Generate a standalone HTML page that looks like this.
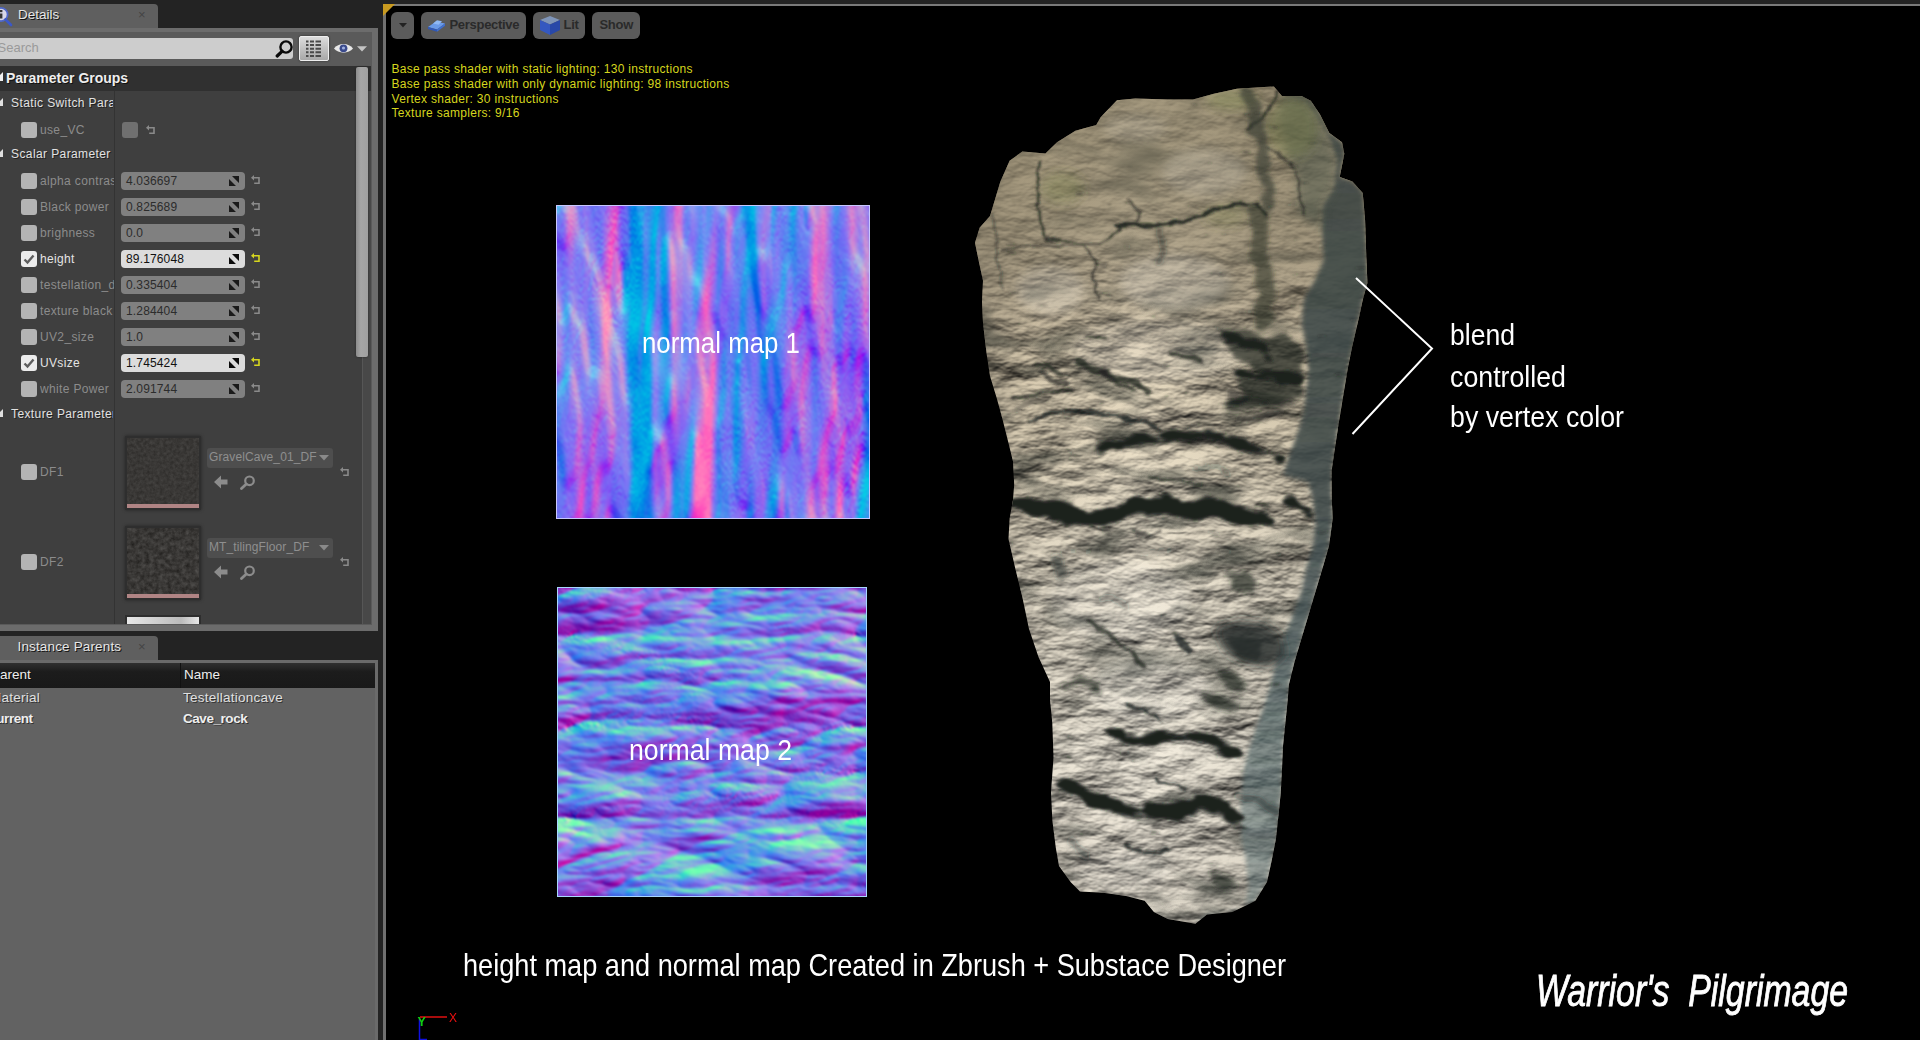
<!DOCTYPE html>
<html><head><meta charset="utf-8"><title>Material Instance Editor</title>
<style>
*{box-sizing:border-box;margin:0;padding:0}
html,body{width:1920px;height:1040px;overflow:hidden;background:#232323;font-family:"Liberation Sans",sans-serif;font-size:12px;color:#ddd}
.abs{position:absolute}
#vp{position:absolute;left:383px;top:4px;width:1537px;height:1036px;background:#000;border-left:3px solid #707070;border-top:2px solid #7a7a7a}
#dtab,#itab{position:absolute;left:0;width:158px;height:24px;background:#5f5f5f;border-radius:0 4px 0 0;color:#e6e6e6;font-size:13.5px;text-shadow:1px 1px 0 #111}
#dpanel{position:absolute;left:-7px;top:28px;width:385px;height:603px;background:#5a5a5a;border:6px solid #6c6c6c;border-top-width:4px}
#ipanel{position:absolute;left:-3px;top:660px;width:381px;height:390px;background:#626262;border:3px solid #6a6a6a}
.lbl{position:absolute;left:40px;color:#8c8c8c;font-size:12px;letter-spacing:.35px;white-space:nowrap;overflow:hidden}
.lbl.on{color:#e4e4e4}
.cb{position:absolute;left:21px;width:16px;height:16px;background:#b4b4b4;border-radius:3px}
.vb{position:absolute;left:121px;width:124px;height:18px;border-radius:4px;background:#808080;color:#2c2c2c;font-size:12px;line-height:18px;padding-left:5px;letter-spacing:.15px}
.cb.on{background:#ececec}
.vb.on{background:#dcdcdc;color:#111}
.hd{position:absolute;left:11px;color:#e2e2e2;font-size:12px;letter-spacing:.4px;white-space:nowrap;text-shadow:1px 1px 0 #222}
.tb{position:absolute;top:12px;height:27px;background:#5b5b5b;border-radius:6px;color:#2a2a2a;font-size:13px;letter-spacing:-.3px;font-weight:bold;white-space:nowrap}
.ipt{font-size:13.5px;color:#eee;white-space:nowrap;text-shadow:1px 1px 0 rgba(0,0,0,.5)}
</style></head>
<body>
<!-- LEFT: details -->
<div id="dtab" style="top:4px"><span class="abs" style="left:18px;top:3px">Details</span><span class="abs" style="left:138px;top:3px;color:#444;text-shadow:none;font-size:13px">×</span></div>
<div id="dpanel"></div>
<div id="rows">
<div class="abs" style="left:0;top:38px;width:293px;height:21px;background:#cdcdcd;border-radius:0 3px 3px 0;color:#9a9a9a;font-size:13px;line-height:20px"><span class="abs" style="left:-2.5px;top:0">Search</span></div>
<div class="abs" style="left:299px;top:36px;width:30px;height:25px;border:1px solid #eee;border-radius:2px;background:linear-gradient(#dcdcdc,#a8a8a8);box-shadow:0 0 2px #222"></div>
<div class="abs" style="left:0;top:66px;width:371px;height:25px;background:#303030"></div>
<div class="abs" style="left:0;top:91px;width:362px;height:533px;background:#3f3f3f"></div>
<div class="abs" style="left:362px;top:91px;width:9px;height:533px;background:#484848;border-left:1px solid #565656"></div>
<div class="abs" style="left:114px;top:91px;width:1px;height:533px;background:#333"></div>
<div class="abs" style="left:356px;top:67px;width:12px;height:290px;background:linear-gradient(90deg,#8c8c8c,#a6a6a6 40%,#a0a0a0);border-radius:2px;box-shadow:0 0 2px #222"></div>
<div class="abs" style="left:6px;top:70px;font-size:14px;font-weight:bold;color:#eee;text-shadow:1px 1px 0 #111;white-space:nowrap">Parameter Groups</div>
<div class="hd" style="top:96px;width:102px;overflow:hidden">Static Switch Parameter Values</div>
<div class="hd" style="top:147px;width:102px;overflow:hidden">Scalar Parameter Values</div>
<div class="hd" style="top:407px;width:102px;overflow:hidden">Texture Parameter Values</div>
<div class="cb" style="top:122px"></div><div class="lbl" style="top:123px">use_VC</div>
<div class="abs" style="left:122px;top:122px;width:16px;height:16px;background:#707070;border-radius:3px"></div>
<div class="cb" style="top:173px"></div><div class="lbl" style="top:174px;width:74px">alpha contrast</div><div class="vb" style="top:172px">4.036697</div>
<div class="cb" style="top:199px"></div><div class="lbl" style="top:200px;width:74px">Black power</div><div class="vb" style="top:198px">0.825689</div>
<div class="cb" style="top:225px"></div><div class="lbl" style="top:226px;width:74px">brighness</div><div class="vb" style="top:224px">0.0</div>
<div class="cb on" style="top:251px"></div><div class="lbl on" style="top:252px;width:74px">height</div><div class="vb on" style="top:250px">89.176048</div>
<div class="cb" style="top:277px"></div><div class="lbl" style="top:278px;width:74px">testellation_depth</div><div class="vb" style="top:276px">0.335404</div>
<div class="cb" style="top:303px"></div><div class="lbl" style="top:304px;width:74px">texture black</div><div class="vb" style="top:302px">1.284404</div>
<div class="cb" style="top:329px"></div><div class="lbl" style="top:330px;width:74px">UV2_size</div><div class="vb" style="top:328px">1.0</div>
<div class="cb on" style="top:355px"></div><div class="lbl on" style="top:356px;width:74px">UVsize</div><div class="vb on" style="top:354px">1.745424</div>
<div class="cb" style="top:381px"></div><div class="lbl" style="top:382px;width:74px">white Power</div><div class="vb" style="top:380px">2.091744</div>
<div class="cb" style="top:464px"></div><div class="lbl" style="top:465px">DF1</div>
<div class="abs" style="left:125px;top:436px;width:76px;height:74px;background:#2e2e2e;box-shadow:0 0 3px #222"><svg class="abs" style="left:2px;top:2px" width="72" height="66"><filter id="tn0" x="0" y="0" width="100%" height="100%" color-interpolation-filters="sRGB"><feTurbulence type="fractalNoise" baseFrequency="0.3" numOctaves="3" seed="2"/><feColorMatrix type="matrix" values="0.125 0 0 0 0.1625  0.125 0 0 0 0.1555  0.125 0 0 0 0.1475  0 0 0 0 1"/></filter><rect width="72" height="66" filter="url(#tn0)"/></svg><div class="abs" style="left:2px;top:68px;width:72px;height:4px;background:#b08484"></div></div>
<div class="abs" style="left:207px;top:448px;width:126px;height:20px;background:#4e4e4e;border-radius:3px;color:#8f8f8f;font-size:12px;line-height:18.5px;padding-left:2px;white-space:nowrap;letter-spacing:.1px">GravelCave_01_DF</div>
<div class="cb" style="top:554px"></div><div class="lbl" style="top:555px">DF2</div>
<div class="abs" style="left:125px;top:526px;width:76px;height:74px;background:#2e2e2e;box-shadow:0 0 3px #222"><svg class="abs" style="left:2px;top:2px" width="72" height="66"><filter id="tn1" x="0" y="0" width="100%" height="100%" color-interpolation-filters="sRGB"><feTurbulence type="fractalNoise" baseFrequency="0.22" numOctaves="3" seed="8"/><feColorMatrix type="matrix" values="0.225 0 0 0 0.1125  0.225 0 0 0 0.1055  0.225 0 0 0 0.09749999999999999  0 0 0 0 1"/></filter><rect width="72" height="66" filter="url(#tn1)"/></svg><div class="abs" style="left:2px;top:68px;width:72px;height:4px;background:#b08484"></div></div>
<div class="abs" style="left:207px;top:538px;width:126px;height:20px;background:#4e4e4e;border-radius:3px;color:#8f8f8f;font-size:12px;line-height:18.5px;padding-left:2px;white-space:nowrap;letter-spacing:.1px">MT_tilingFloor_DF</div>
<div class="abs" style="left:125px;top:615px;width:76px;height:9px;background:#2e2e2e"><div class="abs" style="left:2px;top:2px;width:72px;height:7px;background:linear-gradient(90deg,#e8e8e8,#d0d0d0 40%,#bbb 75%,#e8e8e8)"></div></div>
<!--ICONS--><svg class="abs" style="left:146px;top:125px" width="10" height="10" viewBox="0 0 10 10"><path d="M0 2.8L3 0V5.6Z" fill="#8a8a8a"/><path d="M2.5 2.8H8V8.2H3.2" fill="none" stroke="#8a8a8a" stroke-width="1.6"/></svg>
<svg class="abs" style="left:229px;top:176px" width="10" height="10" viewBox="0 0 10 10"><path d="M3 0H10V7Z M0 3V10H7Z" fill="#1a1a1a"/></svg>
<svg class="abs" style="left:251px;top:175px" width="10" height="10" viewBox="0 0 10 10"><path d="M0 2.8L3 0V5.6Z" fill="#8a8a8a"/><path d="M2.5 2.8H8V8.2H3.2" fill="none" stroke="#8a8a8a" stroke-width="1.6"/></svg>
<svg class="abs" style="left:229px;top:202px" width="10" height="10" viewBox="0 0 10 10"><path d="M3 0H10V7Z M0 3V10H7Z" fill="#1a1a1a"/></svg>
<svg class="abs" style="left:251px;top:201px" width="10" height="10" viewBox="0 0 10 10"><path d="M0 2.8L3 0V5.6Z" fill="#8a8a8a"/><path d="M2.5 2.8H8V8.2H3.2" fill="none" stroke="#8a8a8a" stroke-width="1.6"/></svg>
<svg class="abs" style="left:229px;top:228px" width="10" height="10" viewBox="0 0 10 10"><path d="M3 0H10V7Z M0 3V10H7Z" fill="#1a1a1a"/></svg>
<svg class="abs" style="left:251px;top:227px" width="10" height="10" viewBox="0 0 10 10"><path d="M0 2.8L3 0V5.6Z" fill="#8a8a8a"/><path d="M2.5 2.8H8V8.2H3.2" fill="none" stroke="#8a8a8a" stroke-width="1.6"/></svg>
<svg class="abs" style="left:229px;top:254px" width="10" height="10" viewBox="0 0 10 10"><path d="M3 0H10V7Z M0 3V10H7Z" fill="#0c0c0c"/></svg>
<svg class="abs" style="left:251px;top:253px" width="10" height="10" viewBox="0 0 10 10"><path d="M0 2.8L3 0V5.6Z" fill="#d6d61e"/><path d="M2.5 2.8H8V8.2H3.2" fill="none" stroke="#d6d61e" stroke-width="1.6"/></svg>
<svg class="abs" style="left:21px;top:251px" width="16" height="16" viewBox="0 0 16 16"><path d="M3.5 8.5L6.5 11.5L12.5 4.5" fill="none" stroke="#5e5e5e" stroke-width="2.4"/></svg>
<svg class="abs" style="left:229px;top:280px" width="10" height="10" viewBox="0 0 10 10"><path d="M3 0H10V7Z M0 3V10H7Z" fill="#1a1a1a"/></svg>
<svg class="abs" style="left:251px;top:279px" width="10" height="10" viewBox="0 0 10 10"><path d="M0 2.8L3 0V5.6Z" fill="#8a8a8a"/><path d="M2.5 2.8H8V8.2H3.2" fill="none" stroke="#8a8a8a" stroke-width="1.6"/></svg>
<svg class="abs" style="left:229px;top:306px" width="10" height="10" viewBox="0 0 10 10"><path d="M3 0H10V7Z M0 3V10H7Z" fill="#1a1a1a"/></svg>
<svg class="abs" style="left:251px;top:305px" width="10" height="10" viewBox="0 0 10 10"><path d="M0 2.8L3 0V5.6Z" fill="#8a8a8a"/><path d="M2.5 2.8H8V8.2H3.2" fill="none" stroke="#8a8a8a" stroke-width="1.6"/></svg>
<svg class="abs" style="left:229px;top:332px" width="10" height="10" viewBox="0 0 10 10"><path d="M3 0H10V7Z M0 3V10H7Z" fill="#1a1a1a"/></svg>
<svg class="abs" style="left:251px;top:331px" width="10" height="10" viewBox="0 0 10 10"><path d="M0 2.8L3 0V5.6Z" fill="#8a8a8a"/><path d="M2.5 2.8H8V8.2H3.2" fill="none" stroke="#8a8a8a" stroke-width="1.6"/></svg>
<svg class="abs" style="left:229px;top:358px" width="10" height="10" viewBox="0 0 10 10"><path d="M3 0H10V7Z M0 3V10H7Z" fill="#0c0c0c"/></svg>
<svg class="abs" style="left:251px;top:357px" width="10" height="10" viewBox="0 0 10 10"><path d="M0 2.8L3 0V5.6Z" fill="#d6d61e"/><path d="M2.5 2.8H8V8.2H3.2" fill="none" stroke="#d6d61e" stroke-width="1.6"/></svg>
<svg class="abs" style="left:21px;top:355px" width="16" height="16" viewBox="0 0 16 16"><path d="M3.5 8.5L6.5 11.5L12.5 4.5" fill="none" stroke="#5e5e5e" stroke-width="2.4"/></svg>
<svg class="abs" style="left:229px;top:384px" width="10" height="10" viewBox="0 0 10 10"><path d="M3 0H10V7Z M0 3V10H7Z" fill="#1a1a1a"/></svg>
<svg class="abs" style="left:251px;top:383px" width="10" height="10" viewBox="0 0 10 10"><path d="M0 2.8L3 0V5.6Z" fill="#8a8a8a"/><path d="M2.5 2.8H8V8.2H3.2" fill="none" stroke="#8a8a8a" stroke-width="1.6"/></svg>
<svg class="abs" style="left:340px;top:467px" width="10" height="10" viewBox="0 0 10 10"><path d="M0 2.8L3 0V5.6Z" fill="#8a8a8a"/><path d="M2.5 2.8H8V8.2H3.2" fill="none" stroke="#8a8a8a" stroke-width="1.6"/></svg>
<svg class="abs" style="left:319px;top:455px" width="10" height="6"><path d="M0 0H10L5 5.5Z" fill="#8a8a8a"/></svg>
<svg class="abs" style="left:214px;top:475px" width="14" height="14" viewBox="0 0 14 14"><path d="M0 7L7 0.5V4.5H13.5V9.5H7V13.5Z" fill="#8c8c8c"/></svg>
<svg class="abs" style="left:240px;top:475px" width="16" height="15" viewBox="0 0 16 15"><circle cx="9.5" cy="5.8" r="4.3" fill="none" stroke="#8c8c8c" stroke-width="2.2"/><path d="M6.3 9L1.5 13.5" stroke="#8c8c8c" stroke-width="2.8" stroke-linecap="round"/></svg>
<svg class="abs" style="left:340px;top:557px" width="10" height="10" viewBox="0 0 10 10"><path d="M0 2.8L3 0V5.6Z" fill="#8a8a8a"/><path d="M2.5 2.8H8V8.2H3.2" fill="none" stroke="#8a8a8a" stroke-width="1.6"/></svg>
<svg class="abs" style="left:319px;top:545px" width="10" height="6"><path d="M0 0H10L5 5.5Z" fill="#8a8a8a"/></svg>
<svg class="abs" style="left:214px;top:565px" width="14" height="14" viewBox="0 0 14 14"><path d="M0 7L7 0.5V4.5H13.5V9.5H7V13.5Z" fill="#8c8c8c"/></svg>
<svg class="abs" style="left:240px;top:565px" width="16" height="15" viewBox="0 0 16 15"><circle cx="9.5" cy="5.8" r="4.3" fill="none" stroke="#8c8c8c" stroke-width="2.2"/><path d="M6.3 9L1.5 13.5" stroke="#8c8c8c" stroke-width="2.8" stroke-linecap="round"/></svg>
<svg class="abs" style="left:275px;top:39px" width="19" height="19" viewBox="0 0 19 19"><circle cx="11" cy="8" r="5.6" fill="none" stroke="#0a0a0a" stroke-width="2.4"/><path d="M7 12.3L2.2 17" stroke="#0a0a0a" stroke-width="3.2" stroke-linecap="round"/></svg>
<svg class="abs" style="left:299px;top:36px" width="30" height="25" viewBox="0 0 30 25"><path d="M7 5.5H9.5M11 5.5H15M16.5 5.5H22" stroke="#4a4a4a" stroke-width="2"/><path d="M7 9.1H9.5M11 9.1H15M16.5 9.1H22" stroke="#4a4a4a" stroke-width="2"/><path d="M7 12.7H9.5M11 12.7H15M16.5 12.7H22" stroke="#4a4a4a" stroke-width="2"/><path d="M7 16.3H9.5M11 16.3H15M16.5 16.3H22" stroke="#4a4a4a" stroke-width="2"/><path d="M7 19.9H9.5M11 19.9H15M16.5 19.9H22" stroke="#4a4a4a" stroke-width="2"/></svg>
<svg class="abs" style="left:333px;top:41px" width="36" height="15" viewBox="0 0 36 15"><path d="M1 7.5C5 1.5 16 1.5 20 7.5C16 13 5 13 1 7.5Z" fill="#e8e8e8"/><circle cx="10.5" cy="7.3" r="3.9" fill="#3a4a8c"/><circle cx="10.5" cy="7" r="1.6" fill="#9fb0e0"/><path d="M24 5.3H34L29 10.5Z" fill="#c4c4c4"/></svg>
<svg class="abs" style="left:-6px;top:72px" width="9" height="9"><path d="M9 0V9H0Z" fill="#f0f0f0"/></svg>
<svg class="abs" style="left:-5px;top:98px" width="8" height="8"><path d="M8 0V8H0Z" fill="#e0e0e0"/></svg>
<svg class="abs" style="left:-5px;top:149px" width="8" height="8"><path d="M8 0V8H0Z" fill="#e0e0e0"/></svg>
<svg class="abs" style="left:-5px;top:409px" width="8" height="8"><path d="M8 0V8H0Z" fill="#e0e0e0"/></svg>
<svg class="abs" style="left:-8px;top:7px" width="22" height="20" viewBox="0 0 22 20"><circle cx="9" cy="7.5" r="6.6" fill="#d8d8e8" stroke="#5068c8" stroke-width="1.8"/><path d="M13.5 12.5L19 18" stroke="#3c58c8" stroke-width="2.6" stroke-linecap="round"/><rect x="8" y="6.5" width="2.4" height="5" fill="#333"/><rect x="8" y="3" width="2.4" height="2.2" fill="#333"/></svg>
<svg class="abs" style="left:0;top:640px" width="13" height="16" viewBox="0 0 13 16"><path d="M-2 1H12V4H-2ZM-2 6.5H2V9.5H-2ZM4 6.5H12V9.5H4ZM-2 12H2V15H-2ZM4 12H12V15H4Z" fill="#f0f0f0"/></svg><!--/ICONS-->
</div>
<!-- LEFT: instance parents -->
<div id="itab" style="top:636px"><span class="abs" style="left:17.5px;top:3px;letter-spacing:.15px">Instance Parents</span><span class="abs" style="left:138px;top:3px;color:#444;text-shadow:none;font-size:13px">×</span></div>
<div id="ipanel"><div class="abs" style="left:0;top:0;width:375px;height:25px;background:linear-gradient(#303030,#1c1c1c 35%,#191919)"></div><div class="abs" style="left:180px;top:0;width:1px;height:25px;background:#111"></div>
<span class="abs ipt" style="left:-9px;top:4px">Parent</span><span class="abs ipt" style="left:184px;top:4px">Name</span>
<span class="abs ipt" style="left:-10px;top:27px;color:#e0e0e0;letter-spacing:.25px">Material</span><span class="abs ipt" style="left:183px;top:27px;color:#e0e0e0;letter-spacing:.25px">Testellationcave</span>
<span class="abs ipt" style="left:-13px;top:48px;font-weight:bold;letter-spacing:-.45px">Current</span><span class="abs ipt" style="left:183px;top:48px;font-weight:bold;letter-spacing:-.45px">Cave_rock</span>
</div>
<!-- VIEWPORT -->
<div id="vp"></div>
<!--VPSTART-->
<!-- toolbar -->
<div class="tb" style="left:391px;width:23px"><svg class="abs" style="left:7.5px;top:11.3px" width="8" height="5"><path d="M0 0h8l-4 4.5z" fill="#222"/></svg></div>
<div class="tb" style="left:421px;width:105px"><svg class="abs" style="left:6px;top:7px" width="20" height="13" viewBox="0 0 20 13"><path d="M1 8L9 2.5L18 4.5L10 10.5Z" fill="#6a9ae8"/><path d="M1 8V10L10 12.8V10.5Z" fill="#2f58b8"/><path d="M10 10.5V12.8L18 6.8V4.5Z" fill="#3f6fd0"/><path d="M6 4.6L10 1.2L15 2.2L11.5 5.8Z" fill="#8fb8f4"/></svg><span class="abs" style="left:28.5px;top:5px">Perspective</span></div>
<div class="tb" style="left:533px;width:52px"><svg class="abs" style="left:6px;top:3px" width="22" height="21" viewBox="0 0 22 21"><path d="M1 5L11 1L21 5L11 9.5Z" fill="#7f95b8"/><path d="M1 5V15L11 20V9.5Z" fill="#3458c0"/><path d="M11 9.5V20L21 15V5Z" fill="#2848a8"/></svg><span class="abs" style="left:30.5px;top:5px">Lit</span></div>
<div class="tb" style="left:592px;width:48px"><span class="abs" style="left:7.5px;top:5px">Show</span></div>
<div class="abs" id="stats" style="left:391.5px;top:62px;color:#d6d61e;font-size:12px;letter-spacing:.31px;line-height:14.75px;white-space:nowrap">Base pass shader with static lighting: 130 instructions<br>Base pass shader with only dynamic lighting: 98 instructions<br>Vertex shader: 30 instructions<br>Texture samplers: 9/16</div>
<svg class="abs" style="left:0;top:0" width="1920" height="1040" viewBox="0 0 1920 1040">
<defs>
<filter id="nm1" x="0" y="0" width="100%" height="100%" color-interpolation-filters="sRGB">
<feTurbulence type="fractalNoise" baseFrequency="0.011 0.002" numOctaves="4" seed="3" result="h0"/>
<feComponentTransfer in="h0" result="h1"><feFuncR type="discrete" tableValues="0 .1 .2 .3 .4 .5 .6 .7 .8 .9 1"/></feComponentTransfer>
<feGaussianBlur in="h1" stdDeviation="2.2 4" result="h2"/>
<feComposite in="h2" in2="h0" operator="arithmetic" k1="0" k2="0.7" k3="1.2" k4="-0.12" result="h"/>
<feConvolveMatrix in="h" order="5 1" kernelMatrix="-1 -1 0 1 1" divisor="0.23" bias="0.46" preserveAlpha="true" result="dx"/>
<feConvolveMatrix in="h" order="1 5" kernelMatrix="1 1 0 -1 -1" divisor="0.1" bias="0.46" preserveAlpha="true" result="dy"/>
<feColorMatrix in="dx" type="matrix" values="1 0 0 0 0  0 0 0 0 0  1 0 0 0 0  0 0 0 0 1" result="r"/>
<feColorMatrix in="dy" type="matrix" values="0 0 0 0 0  1 0 0 0 0  0 0 0 0 0  0 0 0 0 1" result="g"/>
<feComposite in="r" in2="g" operator="arithmetic" k1="0" k2="1" k3="1" k4="0" result="rg"/>
<feComponentTransfer in="rg" result="ct"><feFuncB type="table" tableValues="0.13 0.06 0 0 0"/></feComponentTransfer>
<feColorMatrix in="ct" type="matrix" values="1 0 0 0 0  0 1 1 0 0  0 0 0 0 0  0 0 0 0 1" result="m1"/>
<feColorMatrix in="rg" type="matrix" values="0 0 0 0 0  0 0 0 0 0  0 0 1 0 0  0 0 0 0 1" result="b0"/>
<feComponentTransfer in="b0" result="b1"><feFuncB type="table" tableValues="0.9 0.93 0.96 0.86 0.74"/></feComponentTransfer>
<feComposite in="m1" in2="b1" operator="arithmetic" k1="0" k2="1" k3="1" k4="0" result="fin"/>
<feGaussianBlur in="fin" stdDeviation="1"/>
</filter>
<filter id="nm2" x="0" y="0" width="100%" height="100%" color-interpolation-filters="sRGB">
<feTurbulence type="turbulence" baseFrequency="0.0035 0.011" numOctaves="5" seed="12" result="h"/>
<feConvolveMatrix in="h" order="5 1" kernelMatrix="-1 -1 0 1 1" divisor="0.25" bias="0.47" preserveAlpha="true" result="dx"/>
<feConvolveMatrix in="h" order="1 5" kernelMatrix="1 1 0 -1 -1" divisor="0.35" bias="0.49" preserveAlpha="true" result="dy"/>
<feColorMatrix in="dx" type="matrix" values="1 0 0 0 0  0 0 0 0 0  0 0 0 0 0  0 0 0 0 1" result="r"/>
<feColorMatrix in="dy" type="matrix" values="0 0 0 0 0  1 0 0 0 0  1 0 0 0 0  0 0 0 0 1" result="g"/>
<feComposite in="r" in2="g" operator="arithmetic" k1="0" k2="1" k3="1" k4="0" result="rg"/>
<feComponentTransfer in="rg" result="fin"><feFuncB type="table" tableValues="0.62 0.8 0.95 0.84 0.7"/></feComponentTransfer>
<feGaussianBlur in="fin" stdDeviation="0.8"/>
</filter>
</defs>
<g id="nmaps">
<rect x="556" y="205" width="314" height="314" fill="#c8c8ff"/>
<clipPath id="c1"><rect x="557" y="206" width="312" height="312"/></clipPath><g clip-path="url(#c1)"><rect x="533" y="182" width="360" height="360" filter="url(#nm1)"/></g>
<rect x="557" y="587" width="310" height="310" fill="#a8d8ff"/>
<clipPath id="c2"><rect x="558" y="588" width="308" height="308"/></clipPath><g clip-path="url(#c2)"><rect x="534" y="564" width="356" height="356" filter="url(#nm2)"/></g>
</g>
<g id="rock">
<defs>
<clipPath id="rc"><path d="M975.0 242.7 L979.6 227.7 L990.0 216.0 L1000.4 181.5 L1009.6 160.8 L1022.3 151.5 L1045.4 153.4 L1057.0 142.3 L1075.4 130.8 L1096.2 125.0 L1100.8 117.0 L1117.0 100.3 L1135.4 98.5 L1167.7 99.6 L1193.0 99.6 L1213.9 93.8 L1237.0 88.8 L1273.9 86.5 L1282.0 96.0 L1301.6 96.0 L1310.8 100.8 L1320.0 114.6 L1329.3 133.0 L1342.0 142.3 L1344.3 153.8 L1339.7 177.0 L1352.4 181.5 L1362.7 193.0 L1365.0 218.5 L1366.2 253.0 L1367.4 283.0 L1362.7 300.0 L1359.3 316.0 L1352.3 346.0 L1347.7 369.0 L1343.0 397.0 L1338.5 424.6 L1335.0 447.7 L1331.6 470.8 L1331.6 496.0 L1332.7 518.5 L1329.0 546.0 L1322.3 569.0 L1315.4 592.0 L1308.5 615.0 L1301.5 638.5 L1294.6 661.5 L1288.9 684.6 L1287.7 700.0 L1285.4 723.0 L1283.0 746.0 L1282.0 769.0 L1280.8 792.0 L1278.5 815.0 L1276.0 838.5 L1271.5 861.5 L1267.0 882.0 L1255.4 900.8 L1246.0 905.4 L1232.3 912.0 L1207.0 914.6 L1195.4 923.8 L1167.7 919.0 L1153.9 912.0 L1144.6 900.8 L1126.0 896.0 L1103.0 892.7 L1080.0 891.5 L1070.8 882.3 L1059.0 866.0 L1055.8 847.7 L1052.3 820.0 L1051.0 792.0 L1053.5 757.7 L1052.3 723.0 L1050.0 700.0 L1050.0 682.0 L1038.5 657.0 L1029.0 629.0 L1022.3 597.0 L1015.4 569.0 L1008.5 539.0 L1009.6 518.5 L1013.0 500.0 L1014.2 484.6 L1013.0 461.5 L1008.5 443.0 L1002.7 420.0 L997.0 399.0 L990.0 376.0 L986.5 353.0 L983.0 323.0 L982.0 301.5 L983.0 280.8 L978.5 260.0Z"/></clipPath>
<linearGradient id="rg" x1="0" y1="90" x2="0" y2="920" gradientUnits="userSpaceOnUse"><stop offset="0" stop-color="#b9ab8e"/><stop offset="0.16" stop-color="#c2b396"/><stop offset="0.27" stop-color="#dccdb0"/><stop offset="0.42" stop-color="#e8dbc0"/><stop offset="0.6" stop-color="#efe6d2"/><stop offset="0.8" stop-color="#f4eddd"/><stop offset="1" stop-color="#e8e0d0"/></linearGradient>
<linearGradient id="rgx" x1="975" y1="0" x2="1300" y2="0" gradientUnits="userSpaceOnUse"><stop offset="0" stop-color="#000" stop-opacity="0.22"/><stop offset="0.15" stop-color="#000" stop-opacity="0.05"/><stop offset="0.5" stop-color="#fff" stop-opacity="0.08"/><stop offset="1" stop-color="#000" stop-opacity="0.08"/></linearGradient>
<filter id="rocky" x="0" y="0" width="100%" height="100%" color-interpolation-filters="sRGB"><feTurbulence type="fractalNoise" baseFrequency="0.014 0.03" numOctaves="5" seed="4" result="n"/><feDiffuseLighting in="n" surfaceScale="7" diffuseConstant="1.08" lighting-color="#fff" result="l"><feDistantLight azimuth="250" elevation="45"/></feDiffuseLighting><feBlend in="SourceGraphic" in2="l" mode="multiply"/></filter>
<filter id="jag" filterUnits="userSpaceOnUse" x="950" y="70" width="440" height="880"><feTurbulence type="fractalNoise" baseFrequency="0.05 0.09" numOctaves="2" seed="9" result="t"/><feDisplacementMap in="SourceGraphic" in2="t" scale="9" xChannelSelector="R" yChannelSelector="G" result="d"/><feGaussianBlur in="d" stdDeviation="0.9"/></filter>
<filter id="jag2" filterUnits="userSpaceOnUse" x="950" y="70" width="440" height="880"><feTurbulence type="fractalNoise" baseFrequency="0.04 0.08" numOctaves="2" seed="5" result="t"/><feDisplacementMap in="SourceGraphic" in2="t" scale="12" xChannelSelector="R" yChannelSelector="G" result="d"/><feGaussianBlur in="d" stdDeviation="2"/></filter>
<filter id="rag" filterUnits="userSpaceOnUse" x="950" y="70" width="440" height="880"><feTurbulence type="fractalNoise" baseFrequency="0.04 0.08" numOctaves="2" seed="5" result="t"/><feDisplacementMap in="SourceGraphic" in2="t" scale="12" xChannelSelector="R" yChannelSelector="G" result="d"/><feGaussianBlur in="d" stdDeviation="3.5" result="a"/><feTurbulence type="fractalNoise" baseFrequency="0.035 0.1" numOctaves="3" seed="17" result="t2"/><feColorMatrix in="t2" type="matrix" values="0 0 0 0 0  0 0 0 0 0  0 0 0 0 0  1 0 0 0 0" result="n"/><feComposite in="a" in2="n" operator="arithmetic" k1="0" k2="1.7" k3="1.8" k4="-1.2" result="c"/><feComponentTransfer in="c" result="m"><feFuncA type="linear" slope="1.9" intercept="-0.25"/></feComponentTransfer><feFlood flood-color="#1b201d" result="f"/><feComposite in="f" in2="m" operator="in" result="o"/><feGaussianBlur in="o" stdDeviation="1"/></filter>
<filter id="mott" x="0" y="0" width="100%" height="100%" color-interpolation-filters="sRGB"><feTurbulence type="fractalNoise" baseFrequency="0.012 0.028" numOctaves="3" seed="31"/><feColorMatrix type="matrix" values="0 0 0 0 0.16  0 0 0 0 0.18  0 0 0 0 0.16  2.2 0 0 0 -1.17"/></filter>
<linearGradient id="shg" x1="0" y1="100" x2="0" y2="910" gradientUnits="userSpaceOnUse"><stop offset="0" stop-color="#3c4542" stop-opacity="0.85"/><stop offset="0.5" stop-color="#3f4a4a" stop-opacity="0.88"/><stop offset="0.68" stop-color="#46575a" stop-opacity="0.78"/><stop offset="0.8" stop-color="#566a6c" stop-opacity="0.66"/><stop offset="1" stop-color="#66797b" stop-opacity="0.55"/></linearGradient>
<filter id="b1" filterUnits="userSpaceOnUse" x="950" y="70" width="440" height="880"><feGaussianBlur stdDeviation="1"/></filter><filter id="b2" filterUnits="userSpaceOnUse" x="950" y="70" width="440" height="880"><feGaussianBlur stdDeviation="2.2"/></filter><filter id="b4" filterUnits="userSpaceOnUse" x="950" y="70" width="440" height="880"><feGaussianBlur stdDeviation="5"/></filter>
</defs>
<g clip-path="url(#rc)">
<rect x="960" y="80" width="420" height="860" fill="url(#rg)" filter="url(#rocky)"/>
<rect x="960" y="80" width="420" height="860" fill="url(#rgx)"/>
<rect x="960" y="80" width="420" height="860" filter="url(#mott)"/>
<linearGradient id="rtop" x1="0" y1="85" x2="0" y2="350" gradientUnits="userSpaceOnUse"><stop offset="0" stop-color="#93886d" stop-opacity="0.62"/><stop offset="0.55" stop-color="#9a8f76" stop-opacity="0.55"/><stop offset="0.8" stop-color="#9a8f78" stop-opacity="0.35"/><stop offset="1" stop-color="#a09580" stop-opacity="0"/></linearGradient>
<rect x="960" y="80" width="420" height="280" fill="url(#rtop)"/>
<path d="M1282.0 96.0 L1301.6 96.0 L1310.8 100.8 L1320.0 114.6 L1329.3 133.0 L1342.0 142.3 L1344.3 153.8 L1339.7 177.0 L1352.4 181.5 L1362.7 193.0 L1365.0 218.5 L1366.2 253.0 L1367.4 283.0 L1362.7 300.0 L1359.3 316.0 L1352.3 346.0 L1347.7 369.0 L1343.0 397.0 L1338.5 424.6 L1335.0 447.7 L1331.6 470.8 L1331.6 496.0 L1332.7 518.5 L1329.0 546.0 L1322.3 569.0 L1315.4 592.0 L1308.5 615.0 L1301.5 638.5 L1294.6 661.5 L1288.9 684.6 L1287.7 700.0 L1285.4 723.0 L1283.0 746.0 L1282.0 769.0 L1280.8 792.0 L1278.5 815.0 L1276.0 838.5 L1271.5 861.5 L1267.0 882.0 L1255.4 900.8 L1246.0 905.4 L1232.3 912.0 L1207.0 914.6 L1195.4 923.8 L1246.0 905.0 L1248.5 884.6 L1246.0 861.5 L1241.5 838.5 L1240.4 815.0 L1241.5 792.0 L1243.9 769.0 L1250.0 746.0 L1258.0 723.0 L1266.0 700.0 L1273.0 675.0 L1279.0 645.0 L1287.7 629.0 L1294.6 610.8 L1301.5 592.0 L1306.0 569.0 L1313.0 546.0 L1315.4 523.0 L1313.0 500.0 L1308.5 482.0 L1283.0 475.0 L1292.0 447.7 L1299.0 429.0 L1303.9 411.0 L1306.0 392.0 L1308.5 369.0 L1306.0 346.0 L1301.5 323.0 L1303.9 300.0 L1315.0 280.0 L1324.0 260.0 L1322.0 230.0 L1323.0 205.0 L1334.0 188.0 L1337.0 160.0 L1330.0 140.0 L1318.0 118.0 L1305.0 100.0Z" fill="url(#shg)" filter="url(#b2)"/>
<path d="M1282.0 96.0 L1301.6 96.0 L1310.8 100.8 L1330.0 140.0 L1337.0 160.0 L1334.0 188.0 L1323.0 205.0 L1322.0 230.0 L1300.0 215.0 L1296.0 170.0 L1285.0 150.0 L1278.0 120.0Z" fill="#4a5246" opacity="0.5" filter="url(#b4)"/>
<g filter="url(#b4)"><ellipse cx="1050" cy="290" rx="34" ry="24" fill="#fff" opacity="0.16"/><ellipse cx="1175" cy="282" rx="55" ry="28" fill="#fff" opacity="0.16"/><ellipse cx="1205" cy="172" rx="42" ry="24" fill="#fff" opacity="0.13"/><ellipse cx="1135" cy="128" rx="32" ry="14" fill="#fff" opacity="0.1"/><ellipse cx="1160" cy="350" rx="90" ry="30" fill="#fff" opacity="0.1"/><ellipse cx="1292" cy="128" rx="26" ry="30" fill="#6f7a3f" opacity="0.32"/><ellipse cx="1062" cy="188" rx="22" ry="16" fill="#6f7a3f" opacity="0.25"/><ellipse cx="1232" cy="100" rx="26" ry="10" fill="#7c8a45" opacity="0.3"/><ellipse cx="1225" cy="215" rx="22" ry="12" fill="#6f7a3f" opacity="0.22"/><ellipse cx="1120" cy="600" rx="70" ry="40" fill="#fff" opacity="0.1"/><ellipse cx="1150" cy="690" rx="60" ry="30" fill="#fff" opacity="0.1"/><ellipse cx="1120" cy="870" rx="50" ry="20" fill="#fff" opacity="0.08"/></g>
<g id="darks"><g filter="url(#jag)"><path d="M1278.0 90.0 L1270.0 105.0 L1262.0 118.0 L1248.0 128.0" fill="none" stroke="#1c211e" stroke-width="3" stroke-linecap="round" stroke-linejoin="round" opacity="0.7"/>
<path d="M1118.0 226.0 L1150.0 225.0 L1185.0 221.0 L1215.0 210.0 L1240.0 203.0 L1258.0 204.0 L1266.0 214.0" fill="none" stroke="#1c211e" stroke-width="3.5" stroke-linecap="round" stroke-linejoin="round" opacity="0.9"/>
<path d="M1040.0 160.0 L1037.0 190.0 L1041.0 225.0 L1046.0 238.0 L1075.0 243.0 L1100.0 244.0 L1122.0 228.0" fill="none" stroke="#1c211e" stroke-width="2.5" stroke-linecap="round" stroke-linejoin="round" opacity="0.75"/>
<path d="M1002.0 250.0 L1040.0 246.0 L1085.0 247.0 L1096.0 262.0 L1094.0 282.0 L1099.0 300.0" fill="none" stroke="#1c211e" stroke-width="2.5" stroke-linecap="round" stroke-linejoin="round" opacity="0.6"/>
<path d="M1127.0 198.0 L1140.0 212.0 L1137.0 222.0" fill="none" stroke="#1c211e" stroke-width="2.5" stroke-linecap="round" stroke-linejoin="round" opacity="0.6"/>
<path d="M993.0 215.0 L998.0 260.0 L1003.0 290.0" fill="none" stroke="#1c211e" stroke-width="2" stroke-linecap="round" stroke-linejoin="round" opacity="0.5"/>
<path d="M1268.0 150.0 L1285.0 158.0 L1296.0 170.0 L1300.0 200.0 L1306.0 215.0" fill="none" stroke="#1c211e" stroke-width="2.5" stroke-linecap="round" stroke-linejoin="round" opacity="0.6"/>
<path d="M1036.0 364.0 L1048.0 366.0 L1060.0 374.0" fill="none" stroke="#1c211e" stroke-width="5" stroke-linecap="round" stroke-linejoin="round" opacity="0.7"/>
<path d="M1078.0 362.0 L1095.0 370.0 L1115.0 378.0 L1135.0 382.0 L1149.0 393.0" fill="none" stroke="#1c211e" stroke-width="6" stroke-linecap="round" stroke-linejoin="round" opacity="0.75"/>
<path d="M1013.0 398.0 L1030.0 394.0 L1050.0 393.0 L1070.0 390.0" fill="none" stroke="#1c211e" stroke-width="4" stroke-linecap="round" stroke-linejoin="round" opacity="0.7"/>
<path d="M1087.0 337.0 L1107.0 337.0" fill="none" stroke="#1c211e" stroke-width="3" stroke-linecap="round" stroke-linejoin="round" opacity="0.7"/>
<path d="M1172.0 354.0 L1190.0 357.0 L1202.0 362.0" fill="none" stroke="#1c211e" stroke-width="5" stroke-linecap="round" stroke-linejoin="round" opacity="0.7"/>
<path d="M1029.0 421.0 L1050.0 414.0 L1075.0 411.0 L1100.0 414.0 L1121.0 418.0 L1145.0 422.0 L1161.0 430.0" fill="none" stroke="#1c211e" stroke-width="4" stroke-linecap="round" stroke-linejoin="round" opacity="0.8"/>
<path d="M1149.0 477.0 L1175.0 482.0 L1202.0 485.0" fill="none" stroke="#1c211e" stroke-width="3" stroke-linecap="round" stroke-linejoin="round" opacity="0.7"/>
<path d="M1040.0 372.0 L1052.0 380.0 L1068.0 384.0" fill="none" stroke="#1c211e" stroke-width="4" stroke-linecap="round" stroke-linejoin="round" opacity="0.6"/>
<path d="M1100.0 372.0 L1118.0 384.0 L1134.0 390.0" fill="none" stroke="#1c211e" stroke-width="4" stroke-linecap="round" stroke-linejoin="round" opacity="0.7"/>
<path d="M1133.0 532.0 L1150.0 534.0 L1160.0 531.0" fill="none" stroke="#1c211e" stroke-width="3" stroke-linecap="round" stroke-linejoin="round" opacity="0.6"/>
<path d="M1089.0 622.0 L1105.0 633.0 L1120.0 645.0 L1133.0 655.0 L1144.0 667.0" fill="none" stroke="#1c211e" stroke-width="5" stroke-linecap="round" stroke-linejoin="round" opacity="0.7"/>
<path d="M1172.0 634.0 L1185.0 637.0 L1195.0 650.0 L1190.0 655.0 L1180.0 648.0Z" fill="#222724" opacity="0.8"/>
<path d="M1128.0 705.0 L1145.0 711.0 L1155.0 716.0 L1163.0 722.0" fill="none" stroke="#1c211e" stroke-width="2.5" stroke-linecap="round" stroke-linejoin="round" opacity="0.8"/>
<path d="M1156.0 779.0 L1170.0 785.0 L1186.0 788.0" fill="none" stroke="#1c211e" stroke-width="2.5" stroke-linecap="round" stroke-linejoin="round" opacity="0.8"/>
<path d="M1126.0 843.0 L1145.0 851.0 L1160.0 853.0 L1168.0 848.0" fill="none" stroke="#1c211e" stroke-width="4" stroke-linecap="round" stroke-linejoin="round" opacity="0.8"/></g>
<g filter="url(#jag2)"><path d="M1245.0 92.0 L1254.0 108.0 L1256.0 130.0 L1264.0 150.0 L1262.0 172.0 L1269.0 190.0 L1267.0 206.0" fill="none" stroke="#343a30" stroke-width="12" stroke-linecap="round" stroke-linejoin="round" opacity="0.65"/>
<path d="M1158.0 232.0 L1163.0 246.0 L1159.0 262.0" fill="none" stroke="#1c211e" stroke-width="6" stroke-linecap="round" stroke-linejoin="round" opacity="0.5"/>
<path d="M1256.0 214.0 L1262.0 232.0 L1259.0 252.0 L1265.0 275.0 L1266.0 300.0 L1262.0 322.0" fill="none" stroke="#2c322a" stroke-width="17" stroke-linecap="round" stroke-linejoin="round" opacity="0.6"/>
<path d="M1220.8 332.3 L1248.5 331.0 L1267.0 337.0 L1287.7 334.6 L1301.5 346.0 L1303.9 369.0 L1301.5 397.0 L1267.0 410.8 L1225.4 408.5 L1243.8 392.3 L1237.0 378.5 L1260.0 376.0 L1248.5 364.6 L1230.0 350.8Z" fill="#222724" opacity="0.72"/>
<path d="M1240.0 420.0 L1265.0 418.0 L1280.0 412.0" fill="none" stroke="#1c211e" stroke-width="6" stroke-linecap="round" stroke-linejoin="round" opacity="0.6"/>
<path d="M1015.0 408.0 L1032.0 402.0 L1048.0 398.0" fill="none" stroke="#1c211e" stroke-width="5" stroke-linecap="round" stroke-linejoin="round" opacity="0.6"/>
<path d="M1180.0 440.0 L1210.0 438.0 L1236.0 446.0 L1262.0 452.0" fill="none" stroke="#1c211e" stroke-width="9" stroke-linecap="round" stroke-linejoin="round" opacity="0.6"/>
<path d="M1230.0 395.0 L1260.0 400.0 L1290.0 404.0" fill="none" stroke="#1c211e" stroke-width="10" stroke-linecap="round" stroke-linejoin="round" opacity="0.6"/>
<path d="M1196.0 470.0 L1215.0 468.0 L1228.0 474.0" fill="none" stroke="#1c211e" stroke-width="5" stroke-linecap="round" stroke-linejoin="round" opacity="0.5"/>
<path d="M1020.0 548.0 L1060.0 552.0 L1100.0 549.0 L1140.0 552.0 L1180.0 548.0 L1230.0 551.0" fill="none" stroke="#1c211e" stroke-width="3" stroke-linecap="round" stroke-linejoin="round" opacity="0.3"/>
<path d="M1050.0 558.0 L1062.0 560.0 L1069.0 575.0 L1064.0 582.0 L1055.0 572.0Z" fill="#222724" opacity="0.55"/>
<path d="M1225.0 573.0 L1245.0 570.0 L1258.0 580.0 L1255.0 594.0 L1238.0 592.0 L1228.0 584.0Z" fill="#222724" opacity="0.7"/>
<path d="M1098.0 600.0 L1112.0 598.0 L1126.0 606.0" fill="none" stroke="#1c211e" stroke-width="5" stroke-linecap="round" stroke-linejoin="round" opacity="0.45"/>
<path d="M1225.0 640.0 L1245.0 636.0 L1262.0 644.0 L1258.0 660.0 L1240.0 662.0Z" fill="#222724" opacity="0.7"/>
<path d="M1216.0 671.0 L1235.0 673.0 L1248.0 686.0 L1240.0 692.0 L1225.0 686.0Z" fill="#222724" opacity="0.7"/>
<path d="M1064.0 684.0 L1078.0 681.0 L1092.0 684.0 L1098.0 691.0" fill="none" stroke="#1c211e" stroke-width="7" stroke-linecap="round" stroke-linejoin="round" opacity="0.7"/>
<path d="M1200.0 692.0 L1220.0 694.0 L1237.0 706.0 L1230.0 712.0 L1212.0 706.0Z" fill="#222724" opacity="0.7"/>
<path d="M1240.0 795.0 L1260.0 800.0 L1275.0 812.0" fill="none" stroke="#1c211e" stroke-width="8" stroke-linecap="round" stroke-linejoin="round" opacity="0.5"/>
<path d="M1071.0 840.0 L1080.0 850.0 L1088.0 857.0" fill="none" stroke="#1c211e" stroke-width="6" stroke-linecap="round" stroke-linejoin="round" opacity="0.45"/>
<path d="M1209.0 871.0 L1222.0 874.0 L1237.0 889.0 L1228.0 891.0 L1215.0 884.0Z" fill="#222724" opacity="0.7"/></g>
<g filter="url(#rag)"><path d="M1224.0 336.0 L1245.0 340.0 L1262.0 347.0 L1272.0 356.0" fill="none" stroke="#1c211e" stroke-width="7" stroke-linecap="round" stroke-linejoin="round" opacity="0.9"/>
<path d="M1240.0 372.0 L1262.0 378.0 L1285.0 374.0 L1298.0 380.0" fill="none" stroke="#1c211e" stroke-width="8" stroke-linecap="round" stroke-linejoin="round" opacity="0.9"/>
<path d="M1228.0 402.0 L1250.0 400.0 L1270.0 404.0" fill="none" stroke="#1c211e" stroke-width="6" stroke-linecap="round" stroke-linejoin="round" opacity="0.9"/>
<path d="M1096.0 451.0 L1121.0 444.0 L1150.0 440.0 L1175.0 436.0 L1202.0 434.0 L1225.0 439.0 L1250.0 447.0 L1283.0 458.0" fill="none" stroke="#1c211e" stroke-width="8" stroke-linecap="round" stroke-linejoin="round" opacity="0.9"/>
<path d="M1015.0 504.0 L1040.0 505.0 L1060.0 510.0 L1089.0 519.0 L1110.0 517.0 L1122.0 514.0" fill="none" stroke="#1c211e" stroke-width="13" stroke-linecap="round" stroke-linejoin="round" opacity="0.95"/>
<path d="M1030.0 512.0 L1060.0 517.0 L1085.0 524.0" fill="none" stroke="#1c211e" stroke-width="7" stroke-linecap="round" stroke-linejoin="round" opacity="0.8"/>
<path d="M1131.0 505.0 L1160.0 506.0 L1190.0 510.0 L1220.0 514.0 L1250.0 517.0 L1267.0 521.0" fill="none" stroke="#1c211e" stroke-width="15" stroke-linecap="round" stroke-linejoin="round" opacity="0.95"/>
<path d="M1150.0 499.0 L1200.0 502.0 L1240.0 508.0" fill="none" stroke="#1c211e" stroke-width="6" stroke-linecap="round" stroke-linejoin="round" opacity="0.7"/>
<path d="M1283.0 499.0 L1300.0 506.0 L1313.0 514.0" fill="none" stroke="#1c211e" stroke-width="8" stroke-linecap="round" stroke-linejoin="round" opacity="0.7"/>
<path d="M1110.0 732.0 L1126.0 739.0 L1149.0 740.0 L1168.0 737.0 L1191.0 735.0 L1209.0 741.0 L1225.0 749.0 L1244.0 755.0" fill="none" stroke="#1c211e" stroke-width="9" stroke-linecap="round" stroke-linejoin="round" opacity="0.95"/>
<path d="M1060.0 783.0 L1080.0 791.0 L1098.0 801.0 L1121.0 808.0 L1136.0 815.0" fill="none" stroke="#1c211e" stroke-width="14" stroke-linecap="round" stroke-linejoin="round" opacity="0.85"/>
<path d="M1151.0 810.0 L1179.0 810.0 L1202.0 800.0 L1221.0 807.0 L1237.0 820.0" fill="none" stroke="#1c211e" stroke-width="15" stroke-linecap="round" stroke-linejoin="round" opacity="0.85"/></g>
<g filter="url(#b4)"><path d="M1214.0 628.0 L1240.0 620.0 L1265.0 622.0 L1282.0 635.0 L1286.0 655.0 L1270.0 668.0 L1245.0 664.0 L1225.0 652.0Z" fill="#222724" opacity="0.8"/></g></g>
</g>
</g><!--/rock-->
<g id="anno" fill="#fff" font-family="'Liberation Sans',sans-serif">
<path d="M1356 278L1432 348.5L1352.5 434" fill="none" stroke="#fff" stroke-width="2"/>
<text x="642" y="353" font-size="29" textLength="158" lengthAdjust="spacingAndGlyphs">normal map 1</text>
<text x="629" y="760" font-size="29" textLength="163" lengthAdjust="spacingAndGlyphs">normal map 2</text>
<text x="1450" y="345" font-size="29" textLength="65" lengthAdjust="spacingAndGlyphs">blend</text>
<text x="1450" y="386.5" font-size="29" textLength="116" lengthAdjust="spacingAndGlyphs">controlled</text>
<text x="1450" y="427" font-size="29" textLength="174" lengthAdjust="spacingAndGlyphs">by vertex color</text>
<text x="463" y="976" font-size="32" textLength="823" lengthAdjust="spacingAndGlyphs">height map and normal map Created in Zbrush + Substace Designer</text>
<text x="1536" y="1005.5" font-size="45" font-style="italic" font-family="'Liberation Sans',sans-serif" stroke="#fff" stroke-width="0.9" textLength="312" lengthAdjust="spacingAndGlyphs" xml:space="preserve">Warrior's  Pilgrimage</text>
</g>
<path d="M383 4H395L383 16Z" fill="#c89a20"/>
<g id="gizmo">
<path d="M420 1017H447" stroke="#e01010" stroke-width="1.5"/>
<path d="M419.5 1019V1040M419 1039.6H427" stroke="#1010e0" stroke-width="1.5" fill="none"/>
<text x="449" y="1022" font-size="12" fill="#f01010" font-family="'Liberation Sans',sans-serif">X</text>
<text x="417.5" y="1026" font-size="12.5" font-weight="bold" fill="#10d010" font-family="'Liberation Sans',sans-serif">Y</text>
</g>
</svg>
<!--VPEND-->
</body></html>
